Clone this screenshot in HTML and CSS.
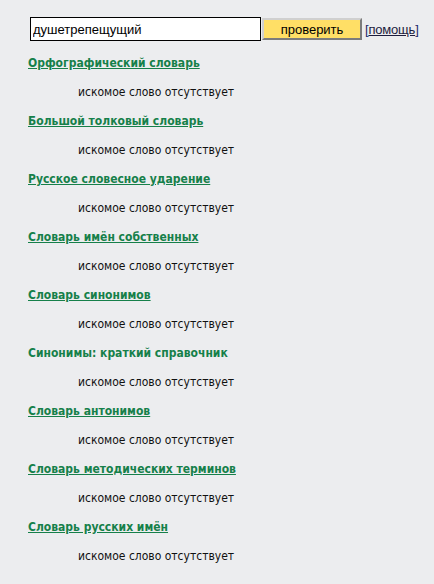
FILE: index.html
```html
<!DOCTYPE html>
<html lang="ru">
<head>
<meta charset="utf-8">
<link rel="stylesheet" href="styles.css">
</head>
<body>
<form class="search">
  <input class="word" type="text" value="душетрепещущий">
  <button class="check" type="button">проверить</button>
  <span class="help">[<a href="#">помощь</a>]</span>
</form>
<div class="results">
  <div class="dict"><a class="title" href="#">Орфографический словарь</a><p class="msg">искомое слово отсутствует</p></div>
  <div class="dict"><a class="title" href="#">Большой толковый словарь</a><p class="msg">искомое слово отсутствует</p></div>
  <div class="dict"><a class="title" href="#">Русское словесное ударение</a><p class="msg">искомое слово отсутствует</p></div>
  <div class="dict"><a class="title" href="#">Словарь имён собственных</a><p class="msg">искомое слово отсутствует</p></div>
  <div class="dict"><a class="title" href="#">Словарь синонимов</a><p class="msg">искомое слово отсутствует</p></div>
  <div class="dict"><span class="title plain">Синонимы: краткий справочник</span><p class="msg">искомое слово отсутствует</p></div>
  <div class="dict"><a class="title" href="#">Словарь антонимов</a><p class="msg">искомое слово отсутствует</p></div>
  <div class="dict"><a class="title" href="#">Словарь методических терминов</a><p class="msg">искомое слово отсутствует</p></div>
  <div class="dict"><a class="title" href="#">Словарь русских имён</a><p class="msg">искомое слово отсутствует</p></div>
</div>
</body>
</html>
```
FILE: styles.css
```css
html, body {
  margin: 0;
  padding: 0;
  background: #ecedef;
}
body {
  font-family: "DejaVu Sans Condensed", "DejaVu Sans", Verdana, sans-serif;
  font-size: 12px;
  color: #000;
}
.search {
  display: flex;
  align-items: center;
  padding: 17px 0 0 30px;
  margin: 0;
}
.word {
  box-sizing: border-box;
  width: 231px;
  height: 24px;
  border: 1px solid #000;
  background: #fff;
  padding: 0 2px;
  margin: 0;
  font-family: "Liberation Sans", Arial, sans-serif;
  font-size: 13px;
  color: #000;
  outline: none;
}
.check {
  box-sizing: border-box;
  width: 100px;
  height: 22px;
  margin: 0 0 0 1px;
  padding: 0;
  background: #ffdf66;
  border: 2px outset #d0d0d0;
  font-family: "Liberation Sans", Arial, sans-serif;
  font-size: 13px;
  color: #000;
}
.help {
  margin-left: 3px;
  font-family: "Liberation Sans", Arial, sans-serif;
  font-size: 13px;
  letter-spacing: -0.2px;
  color: #1c2a6b;
}
.help a {
  color: #1c1c3c;
}
.results {
  padding: 15px 0 0 28px;
}
.dict {
  height: 58px;
}
.title {
  font-weight: bold;
  color: #16804a;
  text-decoration: underline;
}
.title.plain {
  text-decoration: none;
}
.msg {
  margin: 15px 0 0 50px;
  color: #111;
}
```
